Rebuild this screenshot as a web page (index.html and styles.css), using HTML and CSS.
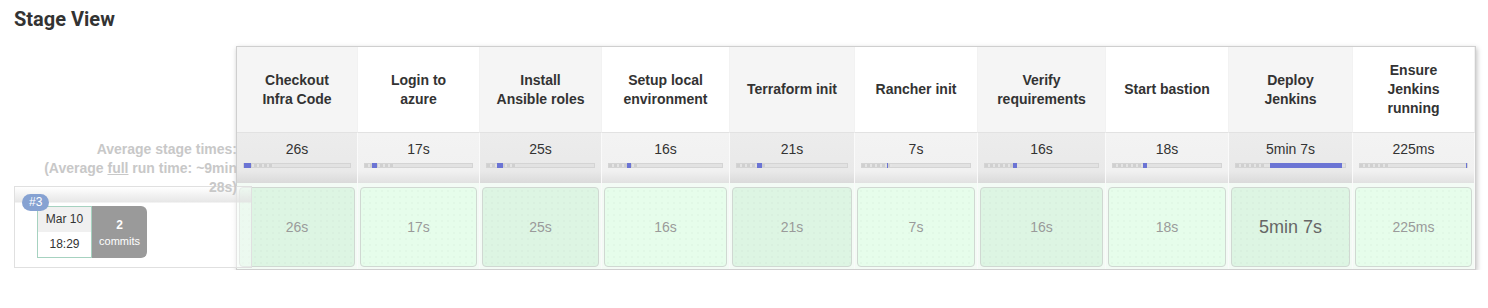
FILE: index.html
```html
<!DOCTYPE html>
<html>
<head>
  <title>Stage View</title>
  <link rel="stylesheet" href="styles.css">
</head>
<body>
  <h2 class="title">Stage View</h2>

  <div class="stage-view">
    <div class="side">
      <div class="side-head"></div>
      <div class="side-avg">
        Average stage times:<br>
        (Average <u>full</u> run time: ~9min<br>
        28s)
      </div>
      <div class="run">
        <span class="badge">#3</span>
        <div class="run-info">
          <div class="date">
            <div class="date-day">Mar 10</div>
            <div class="date-time">18:29</div>
          </div>
          <div class="commits">
            <b>2</b>
            <span>commits</span>
          </div>
        </div>
      </div>
    </div>

    <div class="stages">
      <!-- headers -->
      <div class="head odd">Checkout Infra Code</div>
      <div class="head">Login to azure</div>
      <div class="head odd">Install Ansible roles</div>
      <div class="head">Setup local environment</div>
      <div class="head odd">Terraform init</div>
      <div class="head">Rancher init</div>
      <div class="head odd">Verify requirements</div>
      <div class="head">Start bastion</div>
      <div class="head odd">Deploy Jenkins</div>
      <div class="head">Ensure Jenkins running</div>

      <!-- average times -->
      <div class="avg odd">26s<div class="bar"><i style="left:0;width:7px"></i></div></div>
      <div class="avg">17s<div class="bar"><i style="left:7px;width:5px"></i></div></div>
      <div class="avg odd">25s<div class="bar"><i style="left:10px;width:6px"></i></div></div>
      <div class="avg">16s<div class="bar"><i style="left:18px;width:4px"></i></div></div>
      <div class="avg odd">21s<div class="bar"><i style="left:20px;width:5px"></i></div></div>
      <div class="avg">7s<div class="bar"><i style="left:25px;width:1px"></i></div></div>
      <div class="avg odd">16s<div class="bar"><i style="left:28px;width:4px"></i></div></div>
      <div class="avg">18s<div class="bar"><i style="left:30px;width:4px"></i></div></div>
      <div class="avg odd">5min 7s<div class="bar"><i style="left:34px;width:72px"></i></div></div>
      <div class="avg">225ms<div class="bar"><i style="left:106px;width:1px"></i></div></div>

      <!-- build #3 -->
      <div class="cell odd"><div class="box">26s</div></div>
      <div class="cell"><div class="box">17s</div></div>
      <div class="cell odd"><div class="box">25s</div></div>
      <div class="cell"><div class="box">16s</div></div>
      <div class="cell odd"><div class="box">21s</div></div>
      <div class="cell"><div class="box">7s</div></div>
      <div class="cell odd"><div class="box">16s</div></div>
      <div class="cell"><div class="box">18s</div></div>
      <div class="cell odd"><div class="box long">5min 7s</div></div>
      <div class="cell"><div class="box">225ms</div></div>
    </div>
  </div>
</body>
</html>
```

FILE: styles.css
```css
/* Jenkins pipeline stage view */
body {
  margin: 0;
  padding: 6px 0 0 14px;
  background-color: #fff;
  font-family: 'Liberation Sans', Arial, sans-serif;
  color: #333;
}

.title {
  margin: 0;
  font-family: Roboto, 'Liberation Sans', sans-serif;
  font-size: 20px;
  line-height: 26px;
  font-weight: 700;
  color: #333;
}

.stage-view {
  display: flex;
  margin-top: 14px;
}

/* left column */
.side {
  width: 222px;
  flex-shrink: 0;
}

.side-head {
  height: 87px;
}

.side-avg {
  position: relative;
  z-index: 3;
  height: 50px;
  padding-top: 7px;
  box-sizing: border-box;
  text-align: right;
  font-size: 14px;
  line-height: 19px;
  font-weight: 700;
  color: #c8c8c8;
  white-space: nowrap;
  margin-right: -1px;
}

.run {
  position: relative;
  z-index: 2;
  width: 238px;
  height: 82px;
  margin-top: 3px;
  box-sizing: border-box;
  border: 1px solid #e0e0e0;
  background: linear-gradient(to bottom, rgba(255, 255, 255, 0.5) 0, rgba(228, 228, 228, 0.9) 15px, rgba(255, 255, 255, 0.45) 16px);
}

.badge {
  position: absolute;
  left: 7px;
  top: 7px;
  z-index: 1;
  padding: 0 7px;
  height: 17px;
  line-height: 17px;
  border-radius: 9px;
  background-color: #86a2d2;
  color: #fff;
  font-size: 12px;
}

.run-info {
  display: flex;
  margin: 19px 0 0 22px;
}

.date {
  width: 55px;
  height: 52px;
  box-sizing: border-box;
  border: 1px solid #a6d2c0;
  font-size: 12px;
  text-align: center;
}

.date-day {
  height: 25px;
  line-height: 25px;
  background-color: #f0f0f0;
}

.date-time {
  line-height: 25px;
  background-color: #fff;
}

.commits {
  width: 55px;
  height: 52px;
  display: flex;
  flex-direction: column;
  align-items: center;
  justify-content: center;
  gap: 3px;
  background-color: #9a9a9a;
  border-radius: 0 6px 6px 0;
  color: #fff;
}

.commits b {
  font-size: 12px;
}

.commits span {
  font-size: 11px;
}

/* stage table */
.stages {
  display: grid;
  grid-template-columns: 121px 122px 122px 128px 125px 123px 128px 123px 124px 122px;
  grid-template-rows: 86px 50px 86px;
  border: 1px solid #cfcfcf;
  box-shadow: 1px 2px 5px rgba(0, 0, 0, 0.25);
  background-color: #fff;
}

.head {
  display: flex;
  align-items: center;
  justify-content: center;
  padding: 0 14px;
  text-align: center;
  font-size: 14px;
  line-height: 19px;
  font-weight: 700;
  color: #333;
  background-color: #fff;
  border-right: 1px solid #f2f2f2;
  border-bottom: 1px solid #e2e2e2;
}

.head.odd {
  background-color: #f5f5f5;
}

.avg {
  padding: 7px 0 0;
  text-align: center;
  font-size: 14px;
  line-height: 19px;
  color: #333;
  background: linear-gradient(to bottom, #f3f3f3 0, #f1f1f1 38px, #e1e1e1 50px);
  border-right: 1px solid #fafafa;
}

.avg.odd {
  background: linear-gradient(to bottom, #ececec 0, #e9e9e9 38px, #dadada 50px);
}

.bar {
  position: relative;
  height: 5px;
  margin: 4px 6px 0;
  box-sizing: border-box;
  border: 1px solid #d4d4d4;
  background: repeating-linear-gradient(90deg, #d0d0d0 0 3px, #e4e4e4 3px 5px) 0 0 / 30px 100% no-repeat, #e2e2e2;
}

.bar i {
  position: absolute;
  top: -1px;
  bottom: -1px;
  background-color: #6b74d4;
}

.cell {
  padding: 4px 2px 2px 2px;
  background-color: #f3fbf5;
  border-right: 1px solid #fafafa;
}

.box {
  height: 100%;
  box-sizing: border-box;
  display: flex;
  align-items: center;
  justify-content: center;
  border: 1px solid #d0d8d2;
  border-radius: 4px;
  background-color: #e6fdeb;
  background-image: radial-gradient(rgba(0, 0, 0, 0.02) 1px, transparent 1px);
  background-size: 6px 6px;
  font-size: 14px;
  color: #9a9a9a;
}

.cell.odd .box {
  background-color: #ddf5e3;
}

.box.long {
  font-size: 18px;
  color: #666;
}
```
